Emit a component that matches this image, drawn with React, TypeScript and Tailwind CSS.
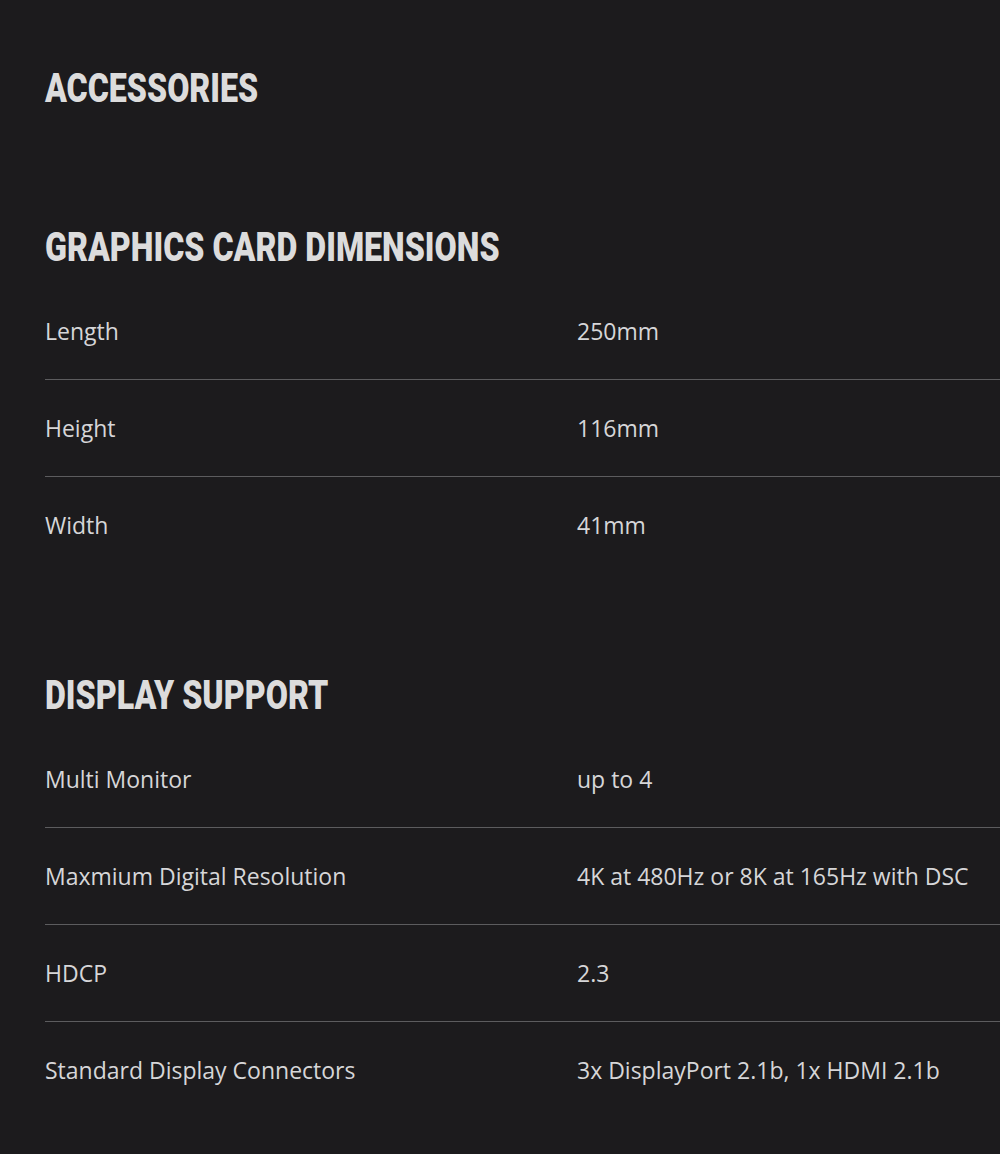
import React from 'react';

type Spec = { label: string; value: string };

const DIMENSIONS: Spec[] = [
  { label: 'Length', value: '250mm' },
  { label: 'Height', value: '116mm' },
  { label: 'Width', value: '41mm' },
];

const DISPLAY: Spec[] = [
  { label: 'Multi Monitor', value: 'up to 4' },
  { label: 'Maxmium Digital Resolution', value: '4K at 480Hz or 8K at 165Hz with DSC' },
  { label: 'HDCP', value: '2.3' },
  { label: 'Standard Display Connectors', value: '3x DisplayPort 2.1b, 1x HDMI 2.1b' },
];

const Heading = ({ children }: { children: React.ReactNode }) => (
  <h2
    className="inline-block origin-left scale-x-[0.785] whitespace-nowrap text-[41px] leading-[40px] font-black uppercase text-[#dcdcdc]"
    style={{ fontFamily: 'Roboto, "Liberation Sans", sans-serif' }}
  >
    {children}
  </h2>
);

const SpecTable = ({ rows }: { rows: Spec[] }) => (
  <div className="mt-4">
    {rows.map((r, i) => (
      <div
        key={r.label}
        className={`flex items-center h-[97px] text-[23px] text-[#d6d6d8] ${i < rows.length - 1 ? 'border-b border-[#5c5c5e]' : ''}`}
      >
        <div className="w-[532px] shrink-0">{r.label}</div>
        <div>{r.value}</div>
      </div>
    ))}
  </div>
);

export default function App() {
  return (
    <div
      className="min-h-[1154px] w-[1000px] overflow-hidden bg-[#1c1b1d] pl-[45px] pt-[68px]"
      style={{ fontFamily: '"Open Sans", "Noto Sans", sans-serif' }}
    >
      <Heading>Accessories</Heading>

      <div className="mt-[119px]">
        <Heading>Graphics Card Dimensions</Heading>
        <SpecTable rows={DIMENSIONS} />
      </div>

      <div className="mt-[101px]">
        <Heading>Display Support</Heading>
        <SpecTable rows={DISPLAY} />
      </div>
    </div>
  );
}
